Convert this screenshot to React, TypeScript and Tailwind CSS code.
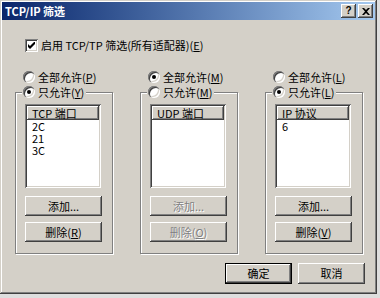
import React from "react";

const raised =
  "shadow-[inset_-1px_-1px_0_#404040,inset_1px_1px_0_#ffffff,inset_-2px_-2px_0_#808080,inset_2px_2px_0_#d4d0c8]";
const sunken =
  "shadow-[inset_1px_1px_0_#808080,inset_-1px_-1px_0_#ffffff,inset_2px_2px_0_#404040,inset_-2px_-2px_0_#d4d0c8]";

function Radio({ checked }: { checked?: boolean }) {
  return (
    <span className="w-3 h-3 shrink-0 rounded-full bg-white flex items-center justify-center shadow-[inset_1px_1px_0_#808080,inset_2px_2px_0_#404040,inset_-1px_-1px_0_#ffffff,inset_-2px_-2px_0_#d4d0c8]">
      {checked && <span className="w-1 h-1 rounded-full bg-black" />}
    </span>
  );
}

function Label({ text, k }: { text: string; k: string }) {
  return (
    <span className="whitespace-nowrap">
      {text}(<span className="underline">{k}</span>)
    </span>
  );
}

function Btn({
  children,
  disabled,
  w,
}: {
  children: React.ReactNode;
  disabled?: boolean;
  w: string;
}) {
  return (
    <div
      className={`${w} h-[20px] bg-[#d4d0c8] flex items-center justify-center ${raised} ${
        disabled ? "text-[#808080] [text-shadow:1px_1px_0_#ffffff]" : "text-black"
      }`}
    >
      {children}
    </div>
  );
}

function Group({
  r1,
  k1,
  r2,
  k2,
  allSel,
  header,
  items,
  delKey,
  disabled,
}: {
  r1: string;
  k1: string;
  r2: string;
  k2: string;
  allSel: boolean;
  header: string;
  items: string[];
  delKey: string;
  disabled?: boolean;
}) {
  return (
    <div className="w-[98px] flex flex-col">
      <div className="h-[12px] ml-[8px] flex items-center gap-[3px]">
        <Radio checked={allSel} />
        <Label text={r1} k={k1} />
      </div>
      <div className="relative mt-[9px] w-[98px] h-[162px] border border-[#808080] shadow-[1px_1px_0_#ffffff,inset_1px_1px_0_#ffffff] pl-[9px] pt-[11px] flex flex-col">
        <div className="absolute -top-[7px] left-[6px] h-[12px] flex items-center gap-[3px] bg-[#d4d0c8] pl-[1px] pr-[2px]">
          <Radio checked={!allSel} />
          <Label text={r2} k={k2} />
        </div>
        <div className={`w-[76px] h-[84px] bg-white p-[2px] flex flex-col ${sunken}`}>
          <div className="h-[14px] shrink-0 bg-[#d4d0c8] flex items-center pl-[5px] shadow-[inset_-1px_-1px_0_#404040,inset_1px_1px_0_#ffffff,inset_-2px_-2px_0_#808080]">
            {header}
          </div>
          {items.map((it) => (
            <div key={it} className="h-[12px] shrink-0 flex items-center pl-[5px]">
              {it}
            </div>
          ))}
        </div>
        <div className="mt-[8px]">
          <Btn w="w-[77px]" disabled={disabled}>
            添加...
          </Btn>
        </div>
        <div className="mt-[6px]">
          <Btn w="w-[77px]" disabled={disabled}>
            <span>
              删除(<span className="underline">{delKey}</span>)
            </span>
          </Btn>
        </div>
      </div>
    </div>
  );
}

export default function App() {
  return (
    <div className="w-[380px] h-[298px] bg-[#dedede] font-['Noto_Sans_CJK_SC',sans-serif] text-[11px] leading-none text-black">
      <div className="w-[377px] h-[294px] bg-[#d4d0c8] p-[2px] flex flex-col shadow-[inset_-1px_-1px_0_#404040,inset_1px_1px_0_#d4d0c8,inset_-2px_-2px_0_#808080,inset_2px_2px_0_#ffffff]">
        <div className="h-[18px] shrink-0 bg-gradient-to-r from-[#0a246a] to-[#a6caf0] flex items-center pl-[3px] pr-[2px]">
          <span className="text-white font-bold text-[11px] whitespace-nowrap">TCP/IP 筛选</span>
          <div className="ml-auto flex gap-[2px]">
            <div className={`w-[15px] h-[14px] bg-[#d4d0c8] flex items-center justify-center ${raised}`}>
              <span className="font-bold text-[10px] font-['Liberation_Sans',sans-serif] leading-none">?</span>
            </div>
            <div className={`w-[15px] h-[14px] bg-[#d4d0c8] flex items-center justify-center ${raised}`}>
              <svg width="8" height="7" viewBox="0 0 8 7">
                <path d="M0 0h2l2 2 2-2h2L5 3.5 8 7H6L4 5 2 7H0l3-3.5z" fill="#000" />
              </svg>
            </div>
          </div>
        </div>

        <div className="mt-[19px] ml-[23px] h-[13px] flex items-center gap-[3px]">
          <span className={`w-[13px] h-[13px] bg-white flex items-center justify-center ${sunken}`}>
            <svg width="7" height="7" viewBox="0 0 7 7">
              <path d="M0 2v3l2 2 5-5V-1L2 4z" fill="#000" />
            </svg>
          </span>
          <span className="whitespace-nowrap">
            启用 TCP/TP 筛选(所有适配器)(<span className="underline">E</span>)
          </span>
        </div>

        <div className="mt-[19px] ml-[13px] flex gap-[27px]">
          <Group
            r1="全部允许"
            k1="P"
            r2="只允许"
            k2="Y"
            allSel={false}
            header="TCP 端口"
            items={["2C", "21", "3C"]}
            delKey="R"
          />
          <Group
            r1="全部允许"
            k1="M"
            r2="只允许"
            k2="M"
            allSel={true}
            header="UDP 端口"
            items={[]}
            delKey="O"
            disabled
          />
          <Group
            r1="全部允许"
            k1="L"
            r2="只允许"
            k2="L"
            allSel={false}
            header="IP 协议"
            items={["6"]}
            delKey="V"
          />
        </div>

        <div className="mt-[9px] mr-[10px] flex justify-end gap-[6px]">
          <div className="w-[67px] h-[21px] border border-black">
            <div className={`w-full h-full bg-[#d4d0c8] flex items-center justify-center ${raised}`}>确定</div>
          </div>
          <div className={`w-[67px] h-[21px] bg-[#d4d0c8] flex items-center justify-center ${raised}`}>取消</div>
        </div>
      </div>
    </div>
  );
}
